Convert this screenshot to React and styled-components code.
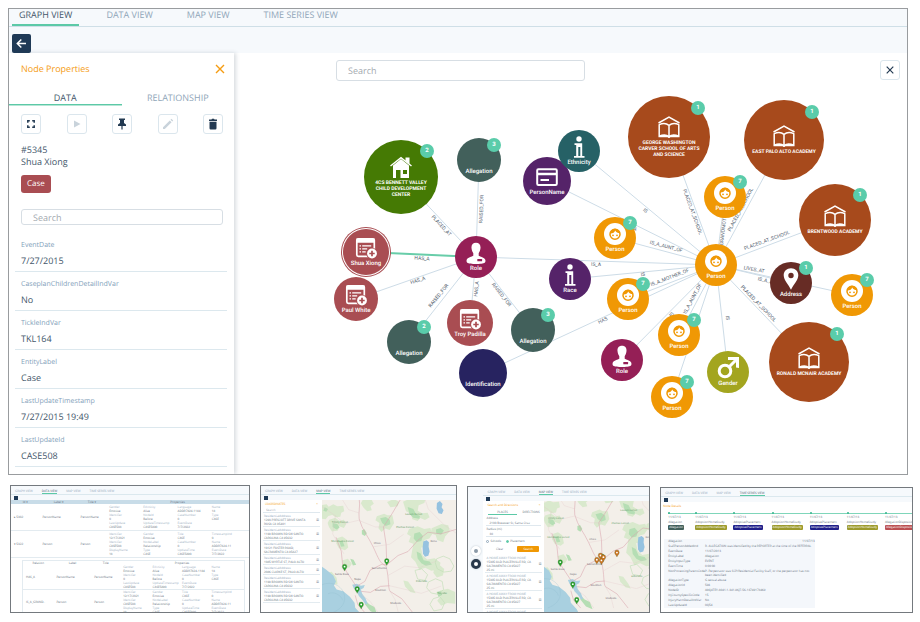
import * as React from "react";
import styled, { createGlobalStyle } from "styled-components";

const views = ["GRAPH VIEW", "DATA VIEW", "MAP VIEW", "TIME SERIES VIEW"];

const fields = [
  { label: "EventDate", value: "7/27/2015" },
  { label: "CaseplanChildrenDetailIndVar", value: "No" },
  { label: "TickleIndVar", value: "TKL164" },
  { label: "EntityLabel", value: "Case" },
  { label: "LastUpdateTimestamp", value: "7/27/2015 19:49" },
  { label: "LastUpdateId", value: "CASE508" },
  { label: "LimitedAccessCode", value: "" },
];

const colors = {
  home: "#457a04",
  allegation: "#42605b",
  record: "#a94d52",
  role: "#951f56",
  ident: "#272360",
  name: "#552369",
  ethnicity: "#266166",
  school: "#a74a1c",
  person: "#f09804",
  address: "#672c25",
  gender: "#a3a51f",
};

const nodes = [
  { id: "center", x: 167, y: 124, size: 74, color: colors.home, icon: "home", label: "4CS BENNETT VALLEY CHILD DEVELOPMENT CENTER", wrap: 62, badge: 2 },
  { id: "alleg1", x: 245, y: 107, size: 44, color: colors.allegation, label: "Allegation", badge: 3 },
  { id: "shua", x: 132, y: 199, size: 46, color: colors.record, icon: "record", label: "Shua Xiong", selected: true },
  { id: "paul", x: 122, y: 246, size: 44, color: colors.record, icon: "record", label: "Paul White" },
  { id: "role1", x: 242, y: 204, size: 42, color: colors.role, icon: "user", label: "Role" },
  { id: "alleg2", x: 175, y: 289, size: 44, color: colors.allegation, label: "Allegation", badge: 2 },
  { id: "troy", x: 236, y: 270, size: 46, color: colors.record, icon: "record", label: "Troy Padilla" },
  { id: "alleg3", x: 299, y: 277, size: 44, color: colors.allegation, label: "Allegation", badge: 3 },
  { id: "ident", x: 249, y: 320, size: 48, color: colors.ident, label: "Identification" },
  { id: "name", x: 313, y: 128, size: 48, color: colors.name, icon: "card", label: "PersonName" },
  { id: "ethnicity", x: 345, y: 98, size: 42, color: colors.ethnicity, icon: "info", label: "Ethnicity" },
  { id: "george", x: 435, y: 84, size: 82, color: colors.school, icon: "school", label: "GEORGE WASHINGTON CARVER SCHOOL OF ARTS AND SCIENCE", wrap: 72, badge: 1 },
  { id: "east", x: 550, y: 87, size: 80, color: colors.school, icon: "school", label: "EAST PALO ALTO ACADEMY", badge: 1 },
  { id: "brent", x: 601, y: 167, size: 72, color: colors.school, icon: "school", label: "BRENTWOOD ACADEMY", badge: 1 },
  { id: "ronald", x: 575, y: 309, size: 80, color: colors.school, icon: "school", label: "RONALD MCNAIR ACADEMY", badge: 1 },
  { id: "personA", x: 381, y: 185, size: 42, color: colors.person, icon: "face", label: "Person", badge: 7 },
  { id: "race", x: 336, y: 226, size: 42, color: colors.name, icon: "info", label: "Race" },
  { id: "personB", x: 394, y: 246, size: 42, color: colors.person, icon: "face", label: "Person", badge: 7 },
  { id: "personC", x: 445, y: 282, size: 42, color: colors.person, icon: "face", label: "Person", badge: 7 },
  { id: "role2", x: 388, y: 307, size: 42, color: colors.role, icon: "user", label: "Role" },
  { id: "personD", x: 438, y: 344, size: 42, color: colors.person, icon: "face", label: "Person", badge: 7 },
  { id: "gender", x: 494, y: 319, size: 42, color: colors.gender, icon: "male", label: "Gender" },
  { id: "personE", x: 491, y: 144, size: 42, color: colors.person, icon: "face", label: "Person", badge: 7 },
  { id: "address", x: 557, y: 230, size: 42, color: colors.address, icon: "pin", label: "Address", badge: 1 },
  { id: "personF", x: 618, y: 242, size: 42, color: colors.person, icon: "face", label: "Person", badge: 7 },
  { id: "hub", x: 482, y: 212, size: 42, color: colors.person, icon: "face", label: "Person" },
];

const edges = [
  { from: "center", to: "role1", label: "PLACED_AT", x: 207, y: 173, angle: 47 },
  { from: "alleg1", to: "role1", label: "RAISED_FOR", x: 248, y: 156, angle: -88 },
  { from: "shua", to: "role1", label: "HAS_A", x: 188, y: 206, angle: 3, active: true },
  { from: "paul", to: "role1", label: "HAS_A", x: 184, y: 228, angle: -18 },
  { from: "alleg2", to: "role1", label: "RAISED_FOR", x: 205, y: 243, angle: -51 },
  { from: "troy", to: "role1", label: "HAS_A", x: 243, y: 236, angle: -85 },
  { from: "alleg3", to: "role1", label: "RAISED_FOR", x: 267, y: 242, angle: 52 },
  { from: "role1", to: "hub", label: "IS_A", x: 362, y: 212, angle: 2 },
  { from: "ident", to: "hub", label: "HAS", x: 369, y: 268, angle: -25 },
  { from: "ethnicity", to: "hub", label: "IS", x: 411, y: 158, angle: 39 },
  { from: "name", to: "hub", label: "IS_A", x: 398, y: 175, angle: 26 },
  { from: "george", to: "hub", label: "PLACED_AT_SCHOOL", x: 458, y: 159, angle: 70 },
  { from: "personA", to: "hub", label: "IS_A_AUNT_OF", x: 432, y: 194, angle: 15 },
  { from: "race", to: "hub", label: "IS", x: 409, y: 222, angle: -6 },
  { from: "personB", to: "hub", label: "IS_A_MOTHER_OF", x: 436, y: 225, angle: -21 },
  { from: "role2", to: "hub", label: "IS", x: 438, y: 262, angle: -45 },
  { from: "personC", to: "hub", label: "IS_A_AUNT_OF", x: 459, y: 246, angle: -62 },
  { from: "personD", to: "hub", label: "IS_A", x: 452, y: 285, angle: -72 },
  { from: "gender", to: "hub", label: "IS", x: 493, y: 265, angle: 84 },
  { from: "east", to: "hub", label: "PLACED_AT_SCHOOL", x: 507, y: 157, angle: -62 },
  { from: "personE", to: "hub", label: "IS_A_GRANDMOTHER_OF", x: 490, y: 176, angle: -83 },
  { from: "brent", to: "hub", label: "PLACED_AT_SCHOOL", x: 533, y: 188, angle: -20 },
  { from: "address", to: "hub", label: "LIVES_AT", x: 520, y: 217, angle: 10 },
  { from: "personF", to: "hub", label: "IS_A_AUNT_OF", x: 540, y: 230, angle: 13 },
  { from: "ronald", to: "hub", label: "PLACED_AT_SCHOOL", x: 524, y: 251, angle: 46 },
];

const nodeById = Object.fromEntries(nodes.map((node) => [node.id, node]));

const personProps = [
  ["Gender", "Ethnicity", "Language", "Name"],
  ["Identifier", "NodeId", "CaseNumber", "Type"],
  ["LastUpdate", "UpdateTimestamp", "EventDate", "EventTime"],
];

const personValues = [
  ["Emotive", "Alive", "ADDR7824-1184", "18"],
  ["0", "Before", "0", "CASE"],
  ["CASE508", "CASE5890", "7/7/2022", ""],
];

const incidentProps = [
  ["Identifier", "Gender", "Title", "TimestampInd"],
  ["Identifier", "NodeLabel", "CaseNumber", "Name"],
  ["DisplayName", "Type", "UpdateTime", "EventDate"],
];

const incidentValues = [
  ["12/17/2021", "Emotive", "CASE", "0"],
  ["CASE508", "Relationship", "0", "ADDR7824-11"],
  ["18", "CASE", "CASE5890", "7/7/2022"],
];

const places = [
  "1293 PRESCOTT DRIVE SANTA ROSA CA 95401",
  "1199 BROWN RD SW SANTO CAROLINA CA 95632",
  "10121 FOSTER ROAD, SACRAMENTO CA 95827",
  "1085 MYRTLE ST, PALO ALTO",
  "2086 CLARKE ST, PALO ALTO",
  "1199 BROWN RD SW SANTO CAROLINA CA 95632",
  "1199 BROWN RD SW SANTO CAROLINA CA 95632",
];

const homes = ["A HOME AWAY FROM HOME", "A HOME AWAY FROM HOME", "A HOME AWAY FROM HOME", "A HOME AWAY FROM HOME"];

const greenPins = [[68, 217], [195, 200], [106, 284], [118, 331]];
const orangePins = [[179, 195], [190, 182], [193, 197], [199, 187], [240, 173]];

const events = [
  { name: "Allegation", color: "#42605b", grow: 27 },
  { name: "AdoptionHomeStudy", color: "#9c9a2c", grow: 38 },
  { name: "AdoptivePlacement", color: "#20208a", grow: 38 },
  { name: "AdoptionHomeStudy", color: "#9c9a2c", grow: 38 },
  { name: "AdoptivePlacement", color: "#20208a", grow: 37 },
  { name: "AdoptionHomeStudy", color: "#9c9a2c", grow: 38 },
  { name: "AllegationDisposition", color: "#bb4f52", grow: 27 },
];

const details = [
  ["StaffPersonAddedInd", "R- ALLEGATION was identified by the REPORTER at the time of the REFERRAL"],
  ["EventDate", "11/07/2013"],
  ["EntityLabel", "Allegation"],
  ["EntityInputType", "EVENT"],
  ["EventTime", "0:00:00"],
  ["NonProtectingParentCode", "P- Perpetrator was SCP/Residential Facility Staff, or the perpetrator has not been identified"],
  ["AllegationType", "G sexual abuse"],
  ["AllegationId", "594"],
  ["NodeID", "A86J4TEY-8041-1-341-86J7-56-13749178469"],
  ["InjCountySpecificCode", "15"],
  ["InjuryHarmDetailIndVar", "No"],
  ["LastUpdateId", "0Q54"],
];

function NodeIcon({ name, color }) {
  switch (name) {
    case "home":
      return (
        <NodeSvg viewBox="0 0 22 22" aria-hidden="true">
          <path fill="#fff" fillRule="evenodd" d="M3 9.500 11 3l8 6.500V22H3ZM6 14v8h4.500v-8Zm7 0v4h4v-4Z" />
          <path fill="none" stroke="#fff" strokeWidth="1.500" d="M.5 10 11 1.700 21.500 10" />
          <path fill="#fff" d="M15.500 1.500h4V8l-4-3Z" />
        </NodeSvg>
      );
    case "school":
      return (
        <NodeSvg viewBox="0 0 22 22" aria-hidden="true" fill="none" stroke="#fff" strokeWidth="1.500">
          <path d="M.5 7 11 1.200 21.500 7" />
          <path d="M1.200 8.200v12.300h8.600L11 21.400l1.200-.9h8.600V8.200M1.200 8.600C5 7 8.500 7.300 11 9.300c2.500-2 6-2.300 9.800-.7M11 9.300v11M1.200 20.300C5 18.500 8.500 18.700 11 20.500c2.500-1.800 6-2 9.800-.2" />
        </NodeSvg>
      );
    case "record":
      return (
        <NodeSvg viewBox="0 0 22 22" aria-hidden="true">
          <rect x="1.800" y="1.800" width="17.500" height="17.500" rx="1.500" fill="none" stroke="#fff" strokeWidth="1.700" />
          <path fill="#fff" d="M1.500 1.500h18v4.300h-18ZM4.500 8.300h1.500v1.300H4.500Zm0 3h1.500v1.300H4.500Zm0 3h1.500v1.300H4.500ZM7.200 8.300h9v1.300h-9Zm0 3h5v1.300h-5Zm0 3h3.500v1.300H7.200Z" />
          <circle cx="17" cy="16.500" r="5.800" fill={color} />
          <circle cx="17" cy="16.500" r="4.900" fill="#fff" />
          <path stroke={color} strokeWidth="1.700" d="M17 13.800v5.400M14.300 16.500h5.400" />
        </NodeSvg>
      );
    case "user":
      return (
        <NodeSvg viewBox="0 0 22 22" aria-hidden="true">
          <path fill="#fff" d="M11 .8c3.200 0 4.800 2.200 4.500 5.300-.2 2.700-1.200 4.200-1.800 5.200v2.500c1.200 1 5.800 1.600 6.600 4 .3 1.200.2 2.300-.6 3-1 1-5 1.200-8.700 1.200s-7.700-.2-8.700-1.200c-.8-.7-.9-1.800-.6-3 .8-2.400 5.400-3 6.600-4v-2.500C7.700 10.300 6.700 8.800 6.500 6.100 6.200 3 7.800.8 11 .8Z" />
          <rect x="12.300" y="17" width="4.800" height="2.300" rx=".5" fill={color} />
        </NodeSvg>
      );
    case "info":
      return (
        <NodeSvg viewBox="0 0 22 22" aria-hidden="true" fill="#fff">
          <circle cx="11" cy="3" r="2.700" />
          <path fillRule="evenodd" d="M6.500 7.200h7.700V20h2.300v1.800H11.300V20h1V11h-2v9h1v1.800H6V20h2.200V9H6.500Z" />
        </NodeSvg>
      );
    case "card":
      return (
        <NodeSvg viewBox="0 0 22 22" aria-hidden="true">
          <rect x="1.200" y="3.200" width="19.600" height="15.800" rx="1.200" fill="none" stroke="#fff" strokeWidth="2" />
          <path stroke="#fff" strokeWidth="2.500" d="M1 8h20" />
          <path stroke="#fff" strokeWidth="2" d="M4.500 14h8.500" />
        </NodeSvg>
      );
    case "face":
      return (
        <NodeSvg viewBox="0 0 22 22" aria-hidden="true">
          <circle cx="11" cy="11" r="11" fill="#fff" />
          <circle cx="11" cy="11.300" r="5" fill="none" stroke={color} strokeWidth="1.500" />
          <path fill={color} d="M6 10.500c3 .2 4.500-1.200 5.200-3 1 1.800 2.700 2.700 5 2.600C15.500 6.800 13.300 5.700 11 5.700S6.500 7.300 6 10.500Z" />
          <circle cx="9" cy="12.300" r=".9" fill={color} />
          <circle cx="13" cy="12.300" r=".9" fill={color} />
        </NodeSvg>
      );
    case "male":
      return (
        <NodeSvg viewBox="0 0 22 22" aria-hidden="true" fill="none" stroke="#fff">
          <circle cx="8" cy="14" r="5.800" strokeWidth="3" />
          <path strokeWidth="3" d="m12 10 6-6" />
          <path fill="#fff" stroke="none" d="M11 0h11v11l-3-.5V5.500L16.500 3 11 3Z" />
        </NodeSvg>
      );
    case "pin":
      return (
        <NodeSvg viewBox="0 0 22 22" aria-hidden="true">
          <path fill="#fff" fillRule="evenodd" d="M11 .3c4.300 0 7.300 3 7.300 7 0 5-5 9.500-7.300 14.500C8.700 16.800 3.700 12.300 3.700 7.300c0-4 3-7 7.300-7Zm0 4.500a2.700 2.700 0 1 0 0 5.400 2.700 2.700 0 0 0 0-5.400Z" />
        </NodeSvg>
      );
    default:
      return <NodeSvg viewBox="0 0 22 22" aria-hidden="true" />;
  }
}

function Edge({ edge }) {
  const a = nodeById[edge.from];
  const b = nodeById[edge.to];
  return (
    <g>
      <line
        x1={a.x}
        y1={a.y}
        x2={b.x}
        y2={b.y}
        stroke={edge.active ? "#68cda9" : "#cddce7"}
        strokeWidth={edge.active ? 2 : 1}
      />
      <EdgeLabel transform={`translate(${edge.x} ${edge.y}) rotate(${edge.angle})`}>{edge.label}</EdgeLabel>
    </g>
  );
}

function Graph() {
  return (
    <Stage>
      <EdgeLayer aria-label="Relationships">
        {edges.map((edge) => (
          <Edge key={edge.from + edge.to} edge={edge} />
        ))}
      </EdgeLayer>
      {nodes.map((node) => (
        <GraphNode key={node.id} type="button" $x={node.x} $y={node.y} $size={node.size} $color={node.color} $selected={node.selected}>
          <NodeIcon name={node.icon} color={node.color} />
          <NodeLabel $wrap={node.wrap} $place={node.size > 60}>{node.label}</NodeLabel>
          {node.badge && <Badge $size={node.size}>{node.badge}</Badge>}
        </GraphNode>
      ))}
    </Stage>
  );
}

function NodePanel() {
  return (
    <Panel>
      <PanelHeader>
        <PanelTitle>Node Properties</PanelTitle>
        <PlainButton type="button" aria-label="Close panel">
          <svg width="10" height="10" viewBox="0 0 10 10" stroke="#f59c12" strokeWidth="1.400">
            <path d="m1 1 8 8M9 1 1 9" />
          </svg>
        </PlainButton>
      </PanelHeader>
      <PanelTabs>
        <PanelTab type="button" $active>DATA</PanelTab>
        <PanelTab type="button">RELATIONSHIP</PanelTab>
      </PanelTabs>
      <Actions>
        <IconButton type="button" aria-label="Expand">
          <svg width="8" height="8" viewBox="0 0 8 8" fill="none" stroke="#233a52" strokeWidth="1.500">
            <path d="M.8 2.800v-2h2M5.200.8h2v2M7.200 5.200v2h-2M2.800 7.200h-2v-2" />
          </svg>
        </IconButton>
        <IconButton type="button" aria-label="Play" disabled>
          <svg width="10" height="10" viewBox="0 0 10 10" fill="#c9d3db">
            <path d="M2 1.500 8.500 5 2 8.500Z" />
          </svg>
        </IconButton>
        <IconButton type="button" aria-label="Pin">
          <svg width="10" height="12" viewBox="0 0 10 12" fill="#233a52">
            <path d="M2 .5h6V2H7v3l2 1.500V8H5.600v3.500H4.400V8H1V6.500L3 5V2H2Z" />
          </svg>
        </IconButton>
        <IconButton type="button" aria-label="Edit" disabled>
          <svg width="12" height="12" viewBox="0 0 12 12" fill="#c9d3db">
            <path d="M1 9.200 7.800 2.400l1.800 1.800L2.800 11H1ZM8.500 1.700l.9-.9 1.800 1.800-.9.900Z" />
          </svg>
        </IconButton>
        <IconButton type="button" aria-label="Delete">
          <svg width="10" height="12" viewBox="0 0 10 12" fill="#233a52">
            <path d="M1 1.500h2.500L4 .8h2l.5.7H9V3H1ZM1.500 3.700h7v6.600q0 1.200-1.200 1.200H2.700q-1.200 0-1.200-1.200Z" />
          </svg>
        </IconButton>
      </Actions>
      <Identity>
        <span>#5345</span>
        <span>Shua Xiong</span>
      </Identity>
      <CaseTag type="button">Case</CaseTag>
      <PanelSearch type="search" placeholder="Search" aria-label="Search properties" />
      <FieldList>
        {fields.map((field) => (
          <Field key={field.label}>
            <FieldLabel>{field.label}</FieldLabel>
            <FieldValue>{field.value}</FieldValue>
          </Field>
        ))}
      </FieldList>
    </Panel>
  );
}

function MiniHeader({ active }) {
  return (
    <>
      <MiniTabs>
        {views.map((view, index) => (
          <MiniTab key={view} type="button" $active={index === active}>{view}</MiniTab>
        ))}
      </MiniTabs>
      <MiniBar>
        <MiniBack type="button" aria-label="Back" />
      </MiniBar>
    </>
  );
}

function Properties({ names, values }) {
  return (
    <PropertyGrid>
      {names.map((row, r) =>
        row.map((name, c) => (
          <Property key={name + r + c}>
            <em>{values[r][c] && name}</em>
            <span>{values[r][c]}</span>
          </Property>
        ))
      )}
    </PropertyGrid>
  );
}

function DataPreview() {
  return (
    <Preview $grow={241} $height={128}>
      <MiniHeader active={1} />
      <MiniTable>
        <colgroup>
          <col width="12%" />
          <col width="16%" />
          <col width="12%" />
          <col />
        </colgroup>
        <thead>
          <tr><th>Id ▾</th><th>Label ▾</th><th>Title ▾</th><th>Properties</th></tr>
        </thead>
        <tbody>
          <tr><td>▸ 5302</td><td>PersonName</td><td>PersonName</td><td><Properties names={personProps} values={personValues} /></td></tr>
          <tr><td>▾ 5322</td><td>Person</td><td>Person</td><td><Properties names={incidentProps} values={incidentValues} /></td></tr>
        </tbody>
      </MiniTable>
      <NestedTable>
        <colgroup>
          <col width="14%" />
          <col width="17%" />
          <col width="13%" />
          <col />
        </colgroup>
        <thead>
          <tr><th>Relation</th><th>Label</th><th>Title</th><th>Properties</th></tr>
        </thead>
        <tbody>
          <tr><td>HAS_A</td><td>PersonName</td><td>PersonName</td><td><Properties names={personProps} values={personValues} /></td></tr>
          <tr><td>IS_A_GRAND..</td><td>Person</td><td>Person</td><td><Properties names={incidentProps} values={incidentValues} /></td></tr>
        </tbody>
      </NestedTable>
    </Preview>
  );
}

function MapPin({ x, y, color }) {
  return (
    <g transform={`translate(${x} ${y})`}>
      <path fill={color} stroke="#5d6b3c" strokeWidth=".8" d="M0 0C-2-6-7-8-7-14a7 7 0 0 1 14 0c0 6-5 8-7 14Z" />
      <circle cy="-13.500" r="2.800" fill="#fff" />
    </g>
  );
}

function MapArt({ viewBox, orange }) {
  return (
    <MapSvg viewBox={viewBox} preserveAspectRatio="xMidYMid slice" role="img" aria-label="Map of Northern California">
      <rect x="-20" y="-20" width="460" height="400" fill="#f3efe9" />
      <g fill="#d9e9cd">
        <path d="m0 18 14-2 6 7 14-7 12 6 18-2 3 17-9 4-3 12-14 2-10-7-12 3-8 10-11-2ZM22 62l18-6 12 9 14-3 7 13-7 12-14-5-4 13-18 3-9-14-4-12ZM124 0l24 0 8 14-10 8 4 12-14 3-12-12-7-12ZM165 52l22-8 10 5 15 0 5 24-13 20-13-4-12 10-9-11 3-16-12-8ZM196 9l20-9 16 8-4 14-22 3ZM244 8l18-8h50l-4 12-17 7-3 16 14 8 16-2 6 14-14 8-14-6-8 9-16-5-4-16-15-8ZM262 90l26-8 20 8 18-3 6 18-9 14-14 4-5 22-18 5-8-14-17-7 6-17-11-7ZM275 134l22 6 6 30 14 12 22-4 18 14-6 20-22 4-18-9-18 6-12-24-13-14ZM330 88l30-13 20 4 5 18-14 15-6 18-18-7-5-15-14-4ZM340 205l15-6 13 12-4 19-18 6-11-14ZM45 118l16-5 13 9 5 24-10 8-18-6-8-14ZM15 222l14-3 15 18 3 20-12-2-12-14ZM60 185l18-5 12 15-8 12-16-3ZM355 275l24-5 22 10v35l-24-2-18 8-12-15 9-12ZM245 245l14 3 16 22 7 14-16-4-16-17Z" />
      </g>
      <g fill="#b5deb4">
        <path d="m8 25 10 5-5 8-9-3ZM32 72l14 3 7 11-9 6-12-8ZM175 58l17-4 12 8 2 14-14 5-11-9ZM258 24l17 6 8 15 12 6-2 8-18-3-12-12ZM278 104l16-5 10 12-5 15-14 3-9-10ZM285 158l12 6 9 20 18 4 7 9-18 4-14-8-11-14ZM120 94l8-3 7 12-6 8-9-5ZM345 280l12-3 4 12-10 6ZM19 228l10 4 7 16-9-2ZM52 126l10 0 6 16-11 2ZM343 92l14-5 10 8-8 12-15-3ZM85 180l10 3 8 15-10 2ZM130 305l12 12 16 8 8 22-20-9-17-21Z" />
      </g>
      <g fill="none" stroke="#c2dfb8" strokeWidth="2">
        <path d="m345 180 20-8 20 8 12 22-8 15-22 3-20-10-6-18ZM320 250l22-10 20 8 4 24-15 15-22-4-14-16ZM335 300l20-6 14 18-8 20-24 5-12-20ZM280 215l20-5 18 18-8 17-22-4Z" />
      </g>
      <path fill="#a9d0e0" d="M-20 195 0 204l12 8 22 18 8 18-6 12 8 12 20 6 20 16 14 18 2 15 18 20 16 30H-20Z" />
      <path fill="#a9d0e0" d="m91 258 14-3 12 6 12-2-4 9-8 4 4 13 10 14 6 16-6 2-10-14-10-11-7-15-8-8Z" />
      <path fill="#95c2e0" d="m305 128 10-4 7 6-1 14 3 14-4 13-10 3-6-9-1-18ZM346 12l9-6 8 9-3 10 6 9-5 11-10-2-6-14Z" />
      <path fill="none" stroke="#8bb9cb" strokeWidth=".8" d="M0 258c35-14 65 8 68 35S50 335 30 343M18 285c18-8 40 4 44 20" />
      <g fill="none" stroke="#d9a5ae" strokeWidth="1.700">
        <path d="M112 0c4 20-3 38 0 60 9 34 28 54 42 84 16 34 20 50 39 58 10 40 5 66 12 76l35 22 34 43M195 198l34-28 30-12 30-34 30-24 38 5 48-14M105 262l24-14 16-34 36-18 14 2M118 278l28 3 30-18 27-2M42 115l16 42 4 40 12 22 28 42M100 290l8 28 22 25M195 198l-2-62-8-52 26-40 26-44" />
      </g>
      <g fill="none" stroke="#e2c5c9" strokeWidth=".9">
        <path d="m-5 20 45 30 28 24 42-10 50 20 34 0M40 50l-8 55 34 60M154 144l50-8 42-30M199 230l50-28 44 5 50-20M199 260l60 14 40 10 60-22M230 343l-10-40-15-25M170 343l-26-36-24-18M60 0l20 32 32 10M310 0l10 30 50 50 36 24" />
      </g>
      <g>
        {greenPins.map(([x, y]) => <MapPin key={x} x={x} y={y} color="#25a12b" />)}
        {orange && orangePins.map(([x, y]) => <MapPin key={x} x={x} y={y + 15} color="#c9731f" />)}
      </g>
      <MapText x="60" y="229">Santa Rosa</MapText>
      <MapText x="172" y="212">Sacramento</MapText>
      <MapText x="166" y="136">Chico</MapText>
      <MapText x="336" y="130">Reno</MapText>
      <MapText x="107" y="243">Napa</MapText>
      <MapText x="176" y="277">Stockton</MapText>
      <MapText x="222" y="315">Modesto</MapText>
      <MapText $park x="54" y="72">Trinity Forest</MapText>
      <MapText $park x="62" y="130">Mendocino Forest</MapText>
      <MapText $park x="250" y="88">Plumas Forest</MapText>
      <MapText $park x="276" y="48">Lassen Forest</MapText>
      <MapText $park x="300" y="250">Eldorado</MapText>
      <MapText $park x="362" y="286">Toiyabe</MapText>
    </MapSvg>
  );
}

function MapPreview() {
  return (
    <Preview $grow={198} $height={128}>
      <MiniHeader active={2} />
      <MiniBody>
        <MiniPanel>
          <MiniTitle>COORDINATES<span>×</span></MiniTitle>
          <MiniInput type="search" placeholder="Search" aria-label="Search places" />
          {places.map((place, index) => (
            <MiniItem key={index}>
              <div>
                <em>ResidentialAddress</em>
                <p>{place}</p>
              </div>
              <span>☒</span>
            </MiniItem>
          ))}
        </MiniPanel>
        <MapArt viewBox="0 0 405 343" />
      </MiniBody>
    </Preview>
  );
}

function ProximityPreview() {
  return (
    <Preview $grow={183} $height={127} $rail>
      <Rail>
        <RailButton type="button" aria-label="Layers" />
        <RailButton type="button" aria-label="Location" $dark />
      </Rail>
      <RailContent>
        <MiniHeader active={2} />
        <MiniBody>
          <MiniPanel>
            <MiniTitle>Search and Directions<span>×</span></MiniTitle>
            <MiniChoice><b>PLACES</b><i>DIRECTIONS</i></MiniChoice>
            <MiniLabel>Address<MiniInput defaultValue="2100 Brewster St, Santa Cruz" /></MiniLabel>
            <MiniLabel>Radius (mi)<MiniInput defaultValue="30" /></MiniLabel>
            <MiniRadios>
              <label><input type="radio" name="unit" /> Schools</label>
              <label><input type="radio" name="unit" defaultChecked /> Placement</label>
            </MiniRadios>
            <MiniButtons>
              <MiniButton type="button">Clear</MiniButton>
              <MiniButton type="button" $primary>Search</MiniButton>
            </MiniButtons>
            {homes.map((home, index) => (
              <MiniItem key={index}>
                <div>
                  <em>{home}</em>
                  <p>15305 OLD PLACERVILLE RD, CA SACRAMENTO CA 95827</p>
                  <p>25 mi</p>
                </div>
                <span>☒</span>
              </MiniItem>
            ))}
          </MiniPanel>
          <MapArt viewBox="15 18 325 337" orange />
        </MiniBody>
      </RailContent>
    </Preview>
  );
}

function TimelinePreview() {
  return (
    <Preview $grow={254} $height={126}>
      <MiniHeader active={3} />
      <MiniTitle>Node Details</MiniTitle>
      <Timeline>
        {events.map((event, index) => (
          <TimelineEvent key={index} $grow={event.grow}>
            <time>11/07/13</time>
            <span>{event.name}</span>
            <Pill $color={event.color}>{event.name}</Pill>
          </TimelineEvent>
        ))}
      </Timeline>
      <DetailTable>
        <thead>
          <tr><th>Allegation</th><td>11/07/13</td></tr>
        </thead>
        <tbody>
          {details.map(([name, value]) => (
            <tr key={name}><th>{name}</th><td>{value}</td></tr>
          ))}
        </tbody>
      </DetailTable>
    </Preview>
  );
}

export default function App() {
  return (
    <Page>
      <GlobalStyle />
      <Frame>
        <TopTabs>
          {views.map((view, index) => (
            <TopTab key={view} type="button" $active={index === 0}>{view}</TopTab>
          ))}
        </TopTabs>
        <BackBar>
          <BackButton type="button" aria-label="Back">
            <svg width="11" height="11" viewBox="0 0 11 11" fill="none" stroke="#fff" strokeWidth="1.500">
              <path d="M10 5.500H1.500M5.300 1.500l-4 4 4 4" />
            </svg>
          </BackButton>
        </BackBar>
        <Workspace>
          <NodePanel />
          <Canvas>
            <Graph />
            <CanvasTools>
              <CanvasSearch type="search" placeholder="Search" aria-label="Search graph" />
              <IconButton type="button" aria-label="Close graph">
                <svg width="8" height="8" viewBox="0 0 8 8" stroke="#233a52" strokeWidth="1.200">
                  <path d="m.7.7 6.600 6.600M7.300.7.7 7.300" />
                </svg>
              </IconButton>
            </CanvasTools>
          </Canvas>
        </Workspace>
      </Frame>
      <Previews>
        <DataPreview />
        <MapPreview />
        <ProximityPreview />
        <TimelinePreview />
      </Previews>
    </Page>
  );
}

const GlobalStyle = createGlobalStyle`
  * {
    box-sizing: border-box;
  }

  body {
    margin: 0;
    background: #fff;
    color: #44576b;
    font: 9px/12px "Open Sans", sans-serif;
    text-rendering: geometricPrecision;
  }

  button,
  input {
    margin: 0;
    padding: 0;
    border: 0;
    border-radius: 0;
    background: none;
    color: inherit;
    font: inherit;
    text-rendering: inherit;
    appearance: none;
  }

  p {
    margin: 0;
  }

  em,
  i {
    font-style: normal;
  }
`;

const Page = styled.main`
  padding: 8px 7px 8px 8px;
`;

const Frame = styled.section`
  display: flex;
  flex-direction: column;
  height: calc(100vh - 155px);
  min-height: 467px;
  margin-right: 5px;
  border: 1px solid #999c9f;
  overflow: hidden;
`;

const TopTabs = styled.nav`
  display: flex;
  gap: 20px;
  padding-left: 3px;
  background: #f6f9fc;
  border-bottom: 1px solid #cfdfe7;
`;

const TopTab = styled.button`
  padding: 0 7px 3px;
  border-bottom: 2px solid ${(props) => (props.$active ? "#5cc9a7" : "transparent")};
  color: ${(props) => (props.$active ? "#44576b" : "#90a6b9")};
`;

const BackBar = styled.div`
  padding: 7px 3px 0;
  background: #f6f9fc;
`;

const BackButton = styled.button`
  display: flex;
  align-items: center;
  justify-content: center;
  width: 19px;
  height: 19px;
  border-radius: 2px;
  background: #1f3a56;
`;

const Workspace = styled.div`
  display: flex;
  flex: 1;
  min-height: 0;
`;

const Panel = styled.aside`
  display: flex;
  flex-direction: column;
  flex: none;
  width: 225px;
  overflow: hidden;
  box-shadow: 2px 0 4px rgba(60, 80, 100, 0.2);
  z-index: 1;
`;

const PanelHeader = styled.header`
  display: flex;
  align-items: center;
  justify-content: space-between;
  padding: 10px 9px 0 12px;
`;

const PanelTitle = styled.h2`
  margin: 0;
  color: #f59c12;
  font-size: 9px;
  font-weight: 400;
`;

const PlainButton = styled.button`
  display: flex;
`;

const PanelTabs = styled.div`
  display: flex;
  margin-top: 17px;
`;

const PanelTab = styled.button`
  flex: 1;
  border-bottom: 1px solid ${(props) => (props.$active ? "#5cc9a7" : "transparent")};
  box-shadow: ${(props) => (props.$active ? "0 1px #b5e6d5" : "none")};
  color: ${(props) => (props.$active ? "#44576b" : "#90a6b9")};
`;

const Actions = styled.div`
  display: flex;
  justify-content: space-between;
  padding: 9px 11px 0 12px;
`;

const IconButton = styled.button`
  display: flex;
  align-items: center;
  justify-content: center;
  width: 20px;
  height: 20px;
  border: 1px solid #dbe6ed;
  border-radius: 3px;
  background: #fff;
`;

const Identity = styled.div`
  display: flex;
  flex-direction: column;
  margin: 10px 12px 0;
`;

const CaseTag = styled.button`
  align-self: flex-start;
  flex: none;
  height: 18px;
  margin: 7px 12px 0;
  padding: 0 6px;
  border-radius: 3px;
  background: #a94d52;
  color: #fff;
  font-size: 8px;
`;

const SearchInput = styled.input`
  border: 1px solid #d7dee4;
  border-radius: 3px;
  background: #fff;

  &::placeholder {
    color: #a3a9af;
  }
`;

const PanelSearch = styled(SearchInput)`
  flex: none;
  height: 16px;
  margin: 16px 11px 0 12px;
  padding: 0 11px;
`;

const FieldList = styled.dl`
  margin: 8px 7px 0 6px;
`;

const Field = styled.div`
  padding: 7px 6px 4px;
  border-bottom: 1px solid #dce8ee;
`;

const FieldLabel = styled.dt`
  color: #83a1ba;
  font-size: 7px;
  line-height: 11px;
`;

const FieldValue = styled.dd`
  margin: 4px 0 0;
`;

const Canvas = styled.div`
  position: relative;
  flex: 1;
  overflow: hidden;
`;

const CanvasTools = styled.div`
  position: relative;
  display: flex;
  justify-content: space-between;
  padding: 7px 7px 0 102px;
`;

const CanvasSearch = styled(SearchInput)`
  flex: 0 1 249px;
  height: 21px;
  padding: 0 11px;
`;

const Stage = styled.div`
  position: absolute;
  inset: 0;
`;

const EdgeLayer = styled.svg`
  position: absolute;
  width: 100%;
  height: 100%;
`;

const EdgeLabel = styled.text`
  fill: #53616f;
  font: 5px Roboto, sans-serif;
  text-anchor: middle;
  dominant-baseline: central;
`;

const GraphNode = styled.button`
  position: absolute;
  left: ${(props) => props.$x - props.$size / 2}px;
  top: ${(props) => props.$y - props.$size / 2}px;
  display: flex;
  flex-direction: column;
  align-items: center;
  justify-content: center;
  gap: 2px;
  width: ${(props) => props.$size}px;
  height: ${(props) => props.$size}px;
  border-radius: 50%;
  background: ${(props) => props.$color};
  box-shadow: ${(props) => (props.$selected ? `0 0 0 1px #fff, 0 0 0 2px ${props.$color}` : "none")};
  color: #fff;
`;

const NodeSvg = styled.svg`
  flex: none;
  width: 22px;
  height: 22px;
`;

const NodeLabel = styled.span`
  width: ${(props) => (props.$wrap ? `${props.$wrap}px` : "auto")};
  font-family: Roboto, sans-serif;
  font-size: ${(props) => (props.$place ? 5 : 6)}px;
  font-weight: ${(props) => (props.$place ? 700 : 500)};
  line-height: 6px;
  text-align: center;
  white-space: ${(props) => (props.$wrap ? "normal" : "nowrap")};
`;

const Badge = styled.span`
  position: absolute;
  top: ${(props) => Math.round(props.$size * 0.15) - 7}px;
  right: ${(props) => Math.round(props.$size * 0.15) - 7}px;
  width: 14px;
  height: 14px;
  border-radius: 50%;
  background: #5accaa;
  font: 700 6px/14px Roboto, sans-serif;
  text-align: center;
`;

const Previews = styled.div`
  display: flex;
  align-items: flex-end;
  gap: 10px;
  margin: 10px 0 0 2px;
`;

const Preview = styled.section`
  display: flex;
  flex-direction: ${(props) => (props.$rail ? "row" : "column")};
  flex: ${(props) => props.$grow} 1 0;
  min-width: 0;
  height: ${(props) => props.$height}px;
  border: 1px solid #74797e;
  overflow: hidden;
  color: #64717e;
  font-size: 3px;
  line-height: 4px;
`;

const MiniTabs = styled.nav`
  display: flex;
  flex: none;
  gap: 9px;
  padding: 3px 4px 0;
  background: #f6f9fc;
  border-bottom: 1px solid #dbe8ee;
`;

const MiniTab = styled.button`
  border-bottom: 1px solid ${(props) => (props.$active ? "#5cc9a7" : "transparent")};
  color: ${(props) => (props.$active ? "#44576b" : "#90a6b9")};
`;

const MiniBar = styled.div`
  flex: none;
  padding: 1px 3px 0;
  background: #f6f9fc;
`;

const MiniBack = styled.button`
  display: block;
  width: 4px;
  height: 4px;
  background: #1f3a56;
`;

const MiniTable = styled.table`
  width: 100%;
  border-collapse: collapse;
  table-layout: fixed;

  thead {
    background: #c8dce8;
  }

  th {
    padding: 0;
    font-weight: 400;
  }

  td {
    padding: 1px 3px;
    border-bottom: 1px solid #e3ebf0;
    white-space: nowrap;
  }
`;

const NestedTable = styled(MiniTable)`
  width: calc(100% - 15px);
  margin: 2px 4px 0 11px;
  border: 1px solid #e3ebf0;

  thead {
    background: #fff;
  }

  td {
    padding: 0 3px;
  }
`;

const PropertyGrid = styled.div`
  display: grid;
  grid-template-columns: repeat(4, 1fr);
`;

const Property = styled.div`
  display: flex;
  flex-direction: column;
  height: 8px;
  min-width: 0;

  em {
    height: 4px;
    color: #9db0bf;
  }
`;

const MiniBody = styled.div`
  display: flex;
  flex: 1;
  min-height: 0;
`;

const MiniPanel = styled.div`
  display: flex;
  flex-direction: column;
  flex: 0 0 61px;
  overflow: hidden;
  padding: 0 2px;
`;

const MiniTitle = styled.h3`
  display: flex;
  flex: none;
  justify-content: space-between;
  margin: 2px 2px 1px;
  color: #f59c12;
  font-size: 3px;
  font-weight: 400;
`;

const MiniInput = styled.input`
  width: 100%;
  height: 6px;
  flex: none;
  padding: 0 3px;
  border-bottom: 1px solid #dfe8ee;

  &::placeholder {
    color: #a3a9af;
  }
`;

const MiniItem = styled.div`
  display: flex;
  flex: none;
  align-items: center;
  justify-content: space-between;
  gap: 3px;
  padding: 1px 1px 0;
  border-bottom: 1px solid #e3ebf0;

  em {
    display: block;
    color: #90a6b9;
  }
`;

const MiniChoice = styled.div`
  display: flex;
  flex: none;
  justify-content: space-around;
  margin-top: 2px;

  b {
    padding: 0 9px;
    border-bottom: 1px solid #5cc9a7;
    font-weight: 400;
  }
`;

const MiniLabel = styled.label`
  flex: none;
  margin-top: 1px;
  padding: 0 1px;
`;

const MiniRadios = styled.div`
  display: flex;
  flex: none;
  gap: 5px;
  margin: 2px 1px;

  label {
    display: flex;
    align-items: center;
    gap: 1px;
  }

  input {
    width: 3px;
    height: 3px;
    border: 1px solid #90a6b9;
    border-radius: 50%;
  }

  input:checked {
    background: #5cc9a7;
    border-color: #5cc9a7;
  }
`;

const MiniButtons = styled.div`
  display: flex;
  flex: none;
  justify-content: flex-end;
  gap: 6px;
  margin: 1px 3px 3px;
`;

const MiniButton = styled.button`
  flex: 1;
  height: 6px;
  border-radius: 1px;
  background: ${(props) => (props.$primary ? "#f09804" : "#fff")};
  color: ${(props) => (props.$primary ? "#fff" : "#64717e")};
`;

const MapSvg = styled.svg`
  display: block;
  flex: 1;
  min-width: 0;
  height: 100%;
`;

const MapText = styled.text`
  fill: ${(props) => (props.$park ? "#5f9a65" : "#706a72")};
  font: 8px "Noto Sans", sans-serif;
  text-anchor: middle;
`;

const Rail = styled.div`
  display: flex;
  flex: none;
  flex-direction: column;
  align-items: center;
  justify-content: center;
  gap: 3px;
  width: 15px;
  padding-top: 16px;
  background: #f6f9fc;
`;

const RailButton = styled.button`
  width: 10px;
  height: 10px;
  border: 3px solid ${(props) => (props.$dark ? "#29394b" : "#fff")};
  border-radius: 50%;
  background: ${(props) => (props.$dark ? "#fff" : "#8b9aa8")};
  box-shadow: 0 0 2px #b5c0ca;
`;

const RailContent = styled.div`
  display: flex;
  flex: 1;
  flex-direction: column;
  min-width: 0;
`;

const Timeline = styled.ol`
  display: flex;
  flex: none;
  margin: 4px 0 0 7px;
  padding: 0;
  border-top: 1px solid #7fd6ba;
  list-style: none;
`;

const TimelineEvent = styled.li`
  display: flex;
  flex: ${(props) => props.$grow} 1 0;
  flex-direction: column;
  align-items: flex-start;
  min-width: 0;

  &::before {
    content: "";
    width: 2px;
    height: 2px;
    margin-top: -2px;
    border-radius: 50%;
    background: #35b58c;
  }

  time {
    margin-top: 1px;
  }

  span {
    margin-top: 1px;
  }
`;

const Pill = styled.b`
  height: 5px;
  margin-top: 1px;
  padding: 0 1px;
  border-radius: 1px;
  background: ${(props) => props.$color};
  color: #fff;
  font-weight: 400;
  line-height: 5px;
`;

const DetailTable = styled.table`
  width: 60%;
  margin: 9px 0 0 3px;
  border-spacing: 0;
  background: #f4f7fb;

  th {
    width: 39px;
    padding: 0 0 1px 4px;
    font-weight: 400;
    text-align: left;
    vertical-align: top;
  }

  td {
    padding: 0 0 1px;
  }

  thead td {
    text-align: right;
  }
`;
